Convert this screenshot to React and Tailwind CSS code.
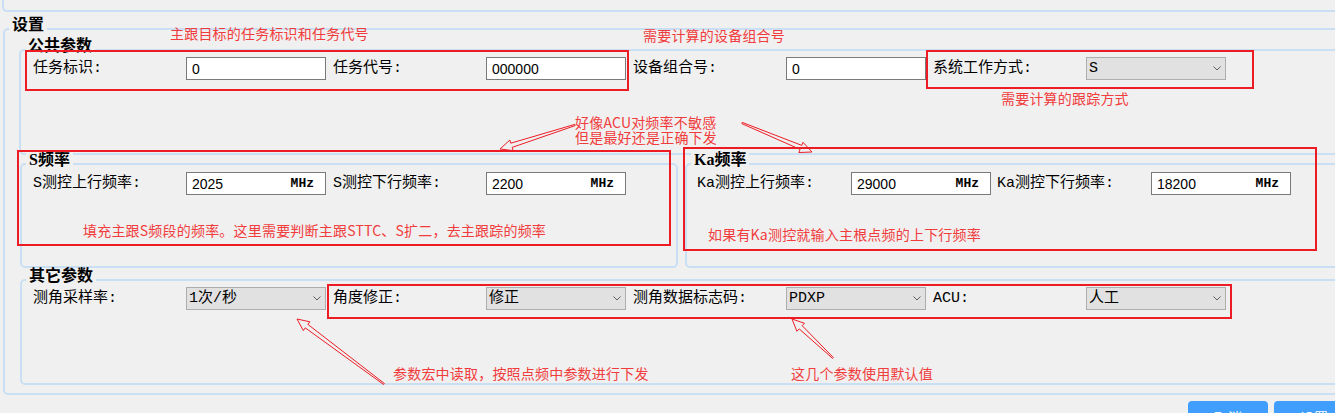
import React from "react";

const LABEL = "font-['Liberation_Mono','Noto_Sans_CJK_SC',monospace] text-[15px] leading-[18px] text-black";
const RED = "font-['Noto_Sans_CJK_SC',sans-serif] text-[14px] tracking-[0.2px] text-[#f03c3c]";

function Group({ title, className, children }) {
  return (
    <div className={"relative border-2 border-[#c9dff3] rounded-[5px] " + className}>
      <span className="absolute left-[4px] top-[-13px] bg-[#f0f0f0] px-[3px] font-['Liberation_Serif','Noto_Sans_CJK_SC',serif] font-bold text-[16px] leading-[16px] text-black whitespace-nowrap">
        {title}
      </span>
      {children}
    </div>
  );
}

function TextBox({ value, unit }) {
  return (
    <div className="w-[140px] h-[23px] shrink-0 bg-white border border-[#7a7a7a] flex items-center justify-between pl-[5px] pr-[11px]">
      <span className="font-['Liberation_Sans',sans-serif] text-[14px] leading-[16px] text-black">{value}</span>
      {unit && (
        <span className="font-['Liberation_Mono',monospace] font-bold text-[13px] leading-[16px] text-black">{unit}</span>
      )}
    </div>
  );
}

function Select({ value }) {
  return (
    <div className="w-[140px] h-[23px] shrink-0 bg-[#e1e1e1] border border-[#adadad] flex items-center justify-between pl-[2px] pr-[4px]">
      <span className={LABEL}>{value}</span>
      <svg width="8" height="5" viewBox="0 0 8 5" className="shrink-0">
        <path d="M0.5 0.5 L4 4 L7.5 0.5" fill="none" stroke="#606060" strokeWidth="1" />
      </svg>
    </div>
  );
}

function Field({ label, labelW = "w-[153px]", children }) {
  return (
    <div className="w-[300px] shrink-0 flex items-center">
      <span className={labelW + " shrink-0 whitespace-nowrap " + LABEL}>{label}</span>
      {children}
    </div>
  );
}

function Arrow({ tx, ty, px, py }) {
  const dx = px - tx;
  const dy = py - ty;
  const len = Math.hypot(dx, dy);
  const ux = dx / len;
  const uy = dy / len;
  const nx = -uy;
  const ny = ux;
  const head = 12;
  const bx = px - ux * head;
  const by = py - uy * head;
  const pts = [
    [tx + nx * 0.6, ty + ny * 0.6],
    [bx + nx * 2.2, by + ny * 2.2],
    [bx + nx * 5.5, by + ny * 5.5],
    [px, py],
    [bx - nx * 5.5, by - ny * 5.5],
    [bx - nx * 2.2, by - ny * 2.2],
    [tx - nx * 0.6, ty - ny * 0.6],
  ]
    .map((p) => p[0].toFixed(1) + "," + p[1].toFixed(1))
    .join(" ");
  return <polygon points={pts} fill="none" stroke="#ed1c24" strokeWidth="1" strokeLinejoin="miter" />;
}

export default function App() {
  return (
    <div className="relative w-[1335px] h-[413px] overflow-hidden bg-[#f0f0f0]">
      <div className="w-[1360px]">
        <div className="ml-[2px] h-[12px] border-l-2 border-b-2 border-[#c9dff3] rounded-bl-[5px]" />

        <Group title="设置" className="mt-[16px] ml-[3px] pb-[8px]">
          <Group title="公共参数" className="mt-[19px] ml-[14px] h-[106px] pt-[6px] pl-[12px]">
            <div className="flex">
              <Field label="任务标识:">
                <TextBox value="0" />
              </Field>
              <Field label="任务代号:">
                <TextBox value="000000" />
              </Field>
              <Field label="设备组合号:">
                <TextBox value="0" />
              </Field>
              <Field label="系统工作方式:">
                <Select value="S" />
              </Field>
            </div>
          </Group>

          <div className="flex mt-[8px]">
            <Group title="S频率" className="ml-[15px] w-[658px] h-[105px] pt-[7px] pl-[11px]">
              <div className="flex">
                <Field label="S测控上行频率:">
                  <TextBox value="2025" unit="MHz" />
                </Field>
                <Field label="S测控下行频率:">
                  <TextBox value="2200" unit="MHz" />
                </Field>
              </div>
            </Group>
            <Group title="Ka频率" className="ml-[7px] flex-1 h-[105px] pt-[7px] pl-[10px]">
              <div className="flex">
                <Field label="Ka测控上行频率:" labelW="w-[154px]">
                  <TextBox value="29000" unit="MHz" />
                </Field>
                <Field label="Ka测控下行频率:" labelW="w-[154px]">
                  <TextBox value="18200" unit="MHz" />
                </Field>
              </div>
            </Group>
          </div>

          <Group title="其它参数" className="mt-[11px] ml-[15px] h-[106px] pt-[6px] pl-[11px]">
            <div className="flex">
              <Field label="测角采样率:">
                <Select value="1次/秒" />
              </Field>
              <Field label="角度修正:">
                <Select value="修正" />
              </Field>
              <Field label="测角数据标志码:">
                <Select value="PDXP" />
              </Field>
              <Field label="ACU:">
                <Select value="人工" />
              </Field>
            </div>
          </Group>
        </Group>

        <div className="flex justify-end gap-[6px] pr-[6px] mt-[6px]">
          <button className="w-[80px] h-[32px] rounded-[4px] bg-[#409eff] text-white font-['Noto_Sans_CJK_SC',sans-serif] text-[14px]">
            取消
          </button>
          <button className="w-[80px] h-[32px] rounded-[4px] bg-[#409eff] text-white font-['Noto_Sans_CJK_SC',sans-serif] text-[14px]">
            设置
          </button>
        </div>
      </div>

      {/* annotation rectangles */}
      <div className="absolute left-[25px] top-[50px] w-[604px] h-[41px] border-2 border-[#ed1c24]" />
      <div className="absolute left-[926px] top-[50px] w-[328px] h-[39px] border-2 border-[#ed1c24]" />
      <div className="absolute left-[17px] top-[150px] w-[654px] h-[96px] border-2 border-[#ed1c24]" />
      <div className="absolute left-[683px] top-[147px] w-[634px] h-[104px] border-2 border-[#ed1c24]" />
      <div className="absolute left-[327px] top-[284px] w-[905px] h-[35px] border-2 border-[#ed1c24]" />

      {/* annotation texts */}
      <span className={"absolute left-[170px] top-[25px] leading-[16px] whitespace-nowrap " + RED}>主跟目标的任务标识和任务代号</span>
      <span className={"absolute left-[643px] top-[27px] leading-[16px] whitespace-nowrap " + RED}>需要计算的设备组合号</span>
      <span className={"absolute left-[1001px] top-[90px] leading-[16px] whitespace-nowrap " + RED}>需要计算的跟踪方式</span>
      <div className={"absolute left-[575px] top-[115px] leading-[15px] whitespace-nowrap " + RED}>
        <div>好像ACU对频率不敏感</div>
        <div>但是最好还是正确下发</div>
      </div>
      <span className={"absolute left-[83px] top-[222px] leading-[16px] whitespace-nowrap " + RED}>
        填充主跟S频段的频率。这里需要判断主跟STTC、S扩二，去主跟踪的频率
      </span>
      <span className={"absolute left-[708px] top-[226px] leading-[16px] whitespace-nowrap " + RED}>如果有Ka测控就输入主根点频的上下行频率</span>
      <span className={"absolute left-[393px] top-[365px] leading-[16px] whitespace-nowrap " + RED}>参数宏中读取，按照点频中参数进行下发</span>
      <span className={"absolute left-[791px] top-[365px] leading-[16px] whitespace-nowrap " + RED}>这几个参数使用默认值</span>

      {/* arrows */}
      <svg className="absolute left-0 top-0 pointer-events-none" width="1335" height="413">
        <Arrow tx={575} ty={125} px={500} py={149} />
        <Arrow tx={742} ty={123} px={812} py={152} />
        <Arrow tx={384} ty={384} px={297} py={319} />
        <Arrow tx={833} ty={358} px={792} py={319} />
      </svg>
    </div>
  );
}
